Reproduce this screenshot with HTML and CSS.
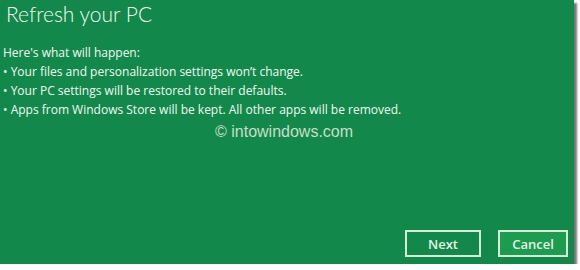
FILE: index.html
```html
<!DOCTYPE html>
<html>
<head>
<meta charset="utf-8">
<link rel="stylesheet" href="styles.css">
</head>
<body>
<div class="panel">
  <h1 class="title">Refresh your PC</h1>
  <div class="body">
    <p>Here's what will happen:</p>
    <p>• Your files and personalization settings won’t change.</p>
    <p>• Your PC settings will be restored to their defaults.</p>
    <p>• Apps from Windows Store will be kept. All other apps will be removed.</p>
  </div>
  <div class="watermark">© intowindows.com</div>
  <div class="actions">
    <button class="btn">Next</button>
    <button class="btn btn-alt">Cancel</button>
  </div>
</div>
</body>
</html>
```

FILE: styles.css
```css
html, body {
  margin: 0;
  padding: 0;
  background: #ffffff;
}
.panel {
  width: 574px;
  height: 264px;
  background: #12894a;
  box-shadow: 3px 3px 2px rgba(60, 60, 60, 0.7);
  display: flex;
  flex-direction: column;
  color: #f2f8f2;
  font-family: "Open Sans", "Noto Sans", sans-serif;
  box-sizing: border-box;
}
.title {
  margin: 0;
  padding: 0 0 0 6px;
  font-family: Lato, "Open Sans", sans-serif;
  font-weight: 300;
  font-size: 21px;
  line-height: 28px;
  height: 40px;
}
.body {
  padding: 3px 0 0 3px;
  font-size: 12px;
  line-height: 19px;
}
.body p {
  margin: 0;
}
.watermark {
  margin: 3px 0 0 215px;
  font-family: "Liberation Sans", Arial, sans-serif;
  font-size: 16px;
  line-height: 20px;
  color: #c9ddc9;
}
.actions {
  margin-top: auto;
  display: flex;
  justify-content: flex-end;
  gap: 17px;
  padding: 0 6px 7px 0;
}
.btn {
  box-sizing: border-box;
  height: 27px;
  width: 76px;
  background: transparent;
  border: 2px solid #d6ecd6;
  color: #e6f3e6;
  font-family: "Open Sans", "Noto Sans", sans-serif;
  font-weight: 600;
  font-size: 13px;
  padding: 0;
}
.btn-alt {
  width: 70px;
  background: #1b9c4f;
}
```
